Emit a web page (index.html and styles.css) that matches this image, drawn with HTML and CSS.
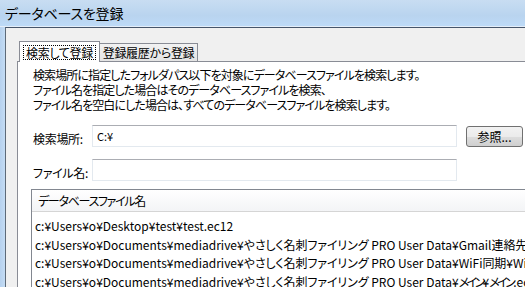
FILE: index.html
```html
<!DOCTYPE html>
<html lang="ja">
<head>
<meta charset="utf-8">
<link rel="stylesheet" href="styles.css">
</head>
<body>
<div class="window">
  <div class="titlebar"><span class="title">データベースを登録</span></div>
  <div class="frame">
    <div class="frame-edge"></div>
    <div class="client">
      <div class="tabs">
        <div class="tab active"><span class="focus">検索して登録</span></div>
        <div class="tab">登録履歴から登録</div>
      </div>
      <div class="panel">
        <p class="desc">検索場所に指定したフォルダパス以下を対象にデータベースファイルを検索します。<br>ファイル名を指定した場合はそのデータベースファイルを検索、<br>ファイル名を空白にした場合は、すべてのデータベースファイルを検索します。</p>
        <div class="row row-first">
          <label class="label">検索場所:</label>
          <div class="input">C:¥</div>
          <button class="btn">参照...</button>
        </div>
        <div class="row row-second">
          <label class="label">ファイル名:</label>
          <div class="input"></div>
        </div>
        <div class="list">
          <div class="list-head">データベースファイル名</div>
          <div class="list-body">
            <div class="item">c:¥Users¥o¥Desktop¥test¥test.ec12</div>
            <div class="item">c:¥Users¥o¥Documents¥mediadrive¥<span class="j">やさしく名刺ファイリング</span> PRO User Data¥Gmail<span class="j">連絡先</span>¥Gmail<span class="j">連絡先</span>.ec12</div>
            <div class="item">c:¥Users¥o¥Documents¥mediadrive¥<span class="j">やさしく名刺ファイリング</span> PRO User Data¥WiFi<span class="j">同期</span>¥WiFi<span class="j">同期</span>.ec12</div>
            <div class="item">c:¥Users¥o¥Documents¥mediadrive¥<span class="j">やさしく名刺ファイリング</span> PRO User Data¥<span class="k">メイン</span>¥<span class="k">メイン</span>.ec12</div>
          </div>
        </div>
      </div>
    </div>
  </div>
</div>
</body>
</html>
```

FILE: styles.css
```css
html, body {
  margin: 0;
  padding: 0;
  width: 525px;
  height: 287px;
  overflow: hidden;
  background: #bcd6f1;
}
.window {
  width: 560px;
  font-family: "Noto Sans CJK JP", sans-serif;
  font-feature-settings: "palt" 1;
  font-size: 12px;
  color: #000;
}
.titlebar {
  height: 27px;
  box-sizing: border-box;
  padding-left: 5px;
  display: flex;
  align-items: center;
  background: linear-gradient(to bottom, #c8ddf2 0%, #b9d4ef 60%, #bddaf7 100%);
  border-bottom: 1px solid #e4eef9;
}
.title {
  font-size: 14px;
  color: #000;
  letter-spacing: -0.2px;
}
.frame {
  display: flex;
  height: 260px;
}
.frame-edge {
  width: 5px;
  flex-shrink: 0;
  background: linear-gradient(to right, #b6d1ee, #c4dcf4);
}
.client {
  flex: 1;
  min-width: 0;
  overflow: hidden;
  background: #f0f0f0;
  border-left: 1px solid #5d6a78;
  border-top: 1px solid #46556a;
  padding: 13px 0 0 11px;
}
.tabs {
  display: flex;
  align-items: flex-end;
  margin-left: 2px;
  height: 20px;
  position: relative;
  z-index: 1;
}
.tab {
  box-sizing: border-box;
  height: 18px;
  padding: 0;
  border: 1px solid #898c95;
  border-bottom: none;
  background: linear-gradient(to bottom, #f2f2f2, #e3e3e3);
  display: flex;
  align-items: center;
  width: 99px;
  justify-content: center;
  margin-left: -1px;
  white-space: nowrap;
  letter-spacing: -0.3px;
}
.tab.active {
  height: 21px;
  width: 81px;
  margin-left: 0;
  margin-bottom: -1px;
  background: #fff;
  padding-top: 1px;
}
.focus {
  border: 1px dotted #000;
  padding: 0 2px;
  line-height: 13px;
}
.panel {
  background: #fff;
  border: 1px solid #898c95;
  border-right: none;
  padding: 5px 0 0 15px;
  height: 240px;
}
.desc {
  margin: 0;
  line-height: 15px;
  letter-spacing: -0.9px;
  white-space: nowrap;
}
.row {
  display: flex;
  align-items: center;
}
.row-first {
  margin-top: 13px;
}
.row-second {
  margin-top: 12px;
}
.label {
  width: 59px;
  flex-shrink: 0;
  padding-top: 4px;
  letter-spacing: -0.3px;
  white-space: nowrap;
}
.input {
  box-sizing: border-box;
  width: 365px;
  flex-shrink: 0;
  height: 22px;
  border: 1px solid #e3e9ef;
  border-top-color: #abadb3;
  padding: 0 0 0 4px;
  display: flex;
  align-items: center;
  font-size: 11px;
}
.btn {
  box-sizing: border-box;
  flex-shrink: 0;
  margin-left: 9px;
  width: 57px;
  height: 21px;
  padding: 0;
  border: 1px solid #707070;
  border-radius: 3px;
  background: linear-gradient(to bottom, #f2f2f2 0%, #ebebeb 50%, #dddddd 51%, #cfcfcf 100%);
  font-family: inherit;
  font-feature-settings: "palt" 1;
  font-size: 12px;
  color: #000;
}
.list {
  margin-top: 8px;
  margin-left: -2px;
  border: 1px solid #828790;
  border-right: none;
}
.list-head {
  height: 22px;
  box-sizing: border-box;
  padding-left: 6px;
  display: flex;
  align-items: center;
  background: linear-gradient(to bottom, #ffffff, #f3f4f6);
  border-bottom: 1px solid #d5d5d5;
  letter-spacing: -1.3px;
}
.list-body {
  padding: 5px 0 0 3px;
}
.item {
  line-height: 18.5px;
  white-space: nowrap;
}
.j {
  letter-spacing: -0.1px;
}
.k {
  letter-spacing: -2.6px;
}
```
